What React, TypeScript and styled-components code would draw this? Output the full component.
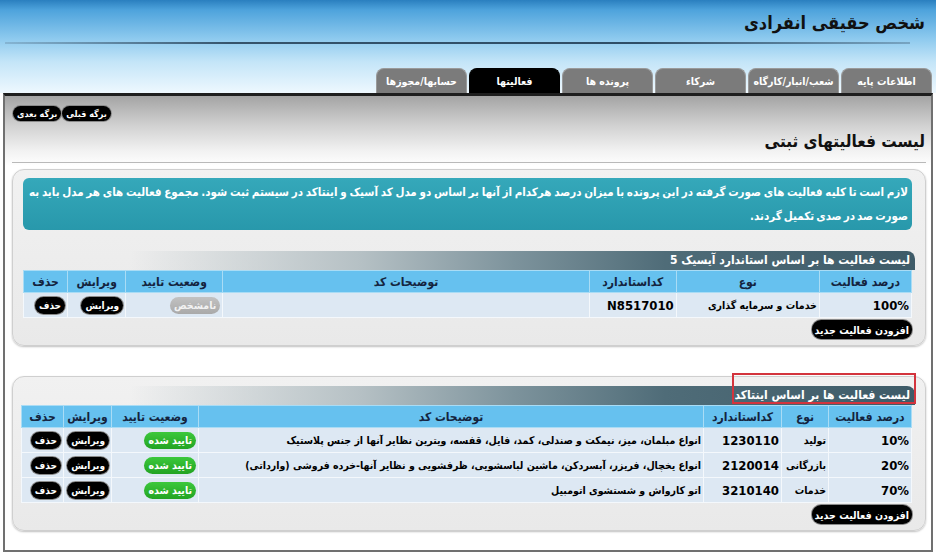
import styled, { createGlobalStyle } from "styled-components";

const GlobalStyle = createGlobalStyle`
  html, body {
    margin: 0;
    padding: 0;
    background: #ffffff;
  }
  body {
    font-family: "DejaVu Sans Condensed", "DejaVu Sans", sans-serif;
  }
`;

const Page = styled.div`
  direction: rtl;
  width: 936px;
  height: 554px;
  display: flex;
  flex-direction: column;
  overflow: hidden;
  padding-bottom: 2px;
  box-sizing: border-box;
`;

const Header = styled.div`
  height: 93px;
  display: flex;
  flex-direction: column;
  background: linear-gradient(
    to bottom,
    #2a7fbf 0px,
    #4ea3dc 10px,
    #8cc9ee 38px,
    #c4e5f8 62px,
    #eef8fe 93px
  );
`;

const Title = styled.h1`
  margin: 0;
  padding: 10px 11px 0 0;
  height: 26px;
  font-size: 18px;
  line-height: 26px;
  font-weight: bold;
  color: #111;
`;

const HeaderRule = styled.div`
  height: 2px;
  margin: 6px 26px 0 5px;
  background: linear-gradient(
    to left,
    rgba(70, 100, 125, 0.4) 0%,
    #2e4d66 30%,
    #35536b 75%,
    rgba(90, 120, 145, 0.3) 100%
  );
`;

const TabBar = styled.div`
  margin-top: auto;
  display: flex;
  gap: 2px;
  padding-right: 4px;
  align-items: flex-end;
`;

const Tab = styled.div<{ $active?: boolean }>`
  width: 91px;
  height: 25px;
  border-radius: 8px 8px 0 0;
  background: ${(p) => (p.$active ? "#000" : "#7b7b7b")};
  border: 1px solid ${(p) => (p.$active ? "#000" : "#9a9a9a")};
  border-bottom: none;
  box-sizing: border-box;
  color: #fff;
  font-size: 10.5px;
  font-weight: bold;
  white-space: nowrap;
  display: flex;
  align-items: center;
  justify-content: center;
`;

const Panel = styled.div`
  flex: 1;
  margin: 0 3px;
  border: 2px solid #707070;
  border-top: 3px solid #1e1e1e;
  background: linear-gradient(
    to bottom,
    #a4a4a4 0px,
    #cfcfcf 28px,
    #f2f2f2 55px,
    #ffffff 70px
  );
  padding: 10px 5px 0 7px;
  display: flex;
  flex-direction: column;
`;

const NavRow = styled.div`
  display: flex;
  justify-content: flex-end;
  gap: 1px;
  padding-left: 1px;
`;

const pillSizes = {
  sm: { h: 15, f: 9, pad: 4 },
  row: { h: 17, f: 10, pad: 4 },
  md: { h: 19, f: 10.5, pad: 3 },
};

const Pill = styled.span<{ $size?: keyof typeof pillSizes }>`
  display: inline-flex;
  align-items: center;
  justify-content: center;
  background: #000;
  color: #fff;
  font-weight: bold;
  border-radius: 9px;
  box-shadow: 0 0 0 1px #8a8a8a;
  white-space: nowrap;
  height: ${(p) => pillSizes[p.$size ?? "sm"].h}px;
  font-size: ${(p) => pillSizes[p.$size ?? "sm"].f}px;
  padding: 0 ${(p) => pillSizes[p.$size ?? "sm"].pad}px;
`;

const PageTitle = styled.h2`
  margin: 8px 0 0;
  padding-right: 1px;
  font-size: 17px;
  line-height: 24px;
  font-weight: bold;
  color: #111;
`;

const Divider = styled.div`
  height: 1px;
  background: #b9b9b9;
  margin: 9px 0 6px;
`;

const Section = styled.div<{ $gapTop?: number }>`
  margin-top: ${(p) => p.$gapTop ?? 0}px;
  border: 1px solid #cfcfcf;
  border-radius: 12px;
  background: linear-gradient(to bottom, #f1f1f1, #e9e9e9);
  box-shadow: 0 1px 2px rgba(0, 0, 0, 0.25);
  padding: 8px 13px 6px 10px;
  display: flex;
  flex-direction: column;
`;

const Notice = styled.div`
  background: linear-gradient(to bottom, #35a8ba, #2898ab);
  border-radius: 6px;
  color: #fff;
  font-size: 11.5px;
  font-weight: bold;
  line-height: 24px;
  word-spacing: -1.5px;
  padding: 2px 4px 2px 6px;
  text-align: justify;
  text-align-last: right;
`;

const Caption = styled.div<{ $gapTop?: number }>`
  position: relative;
  margin-top: ${(p) => p.$gapTop ?? 0}px;
  margin-right: -3px;
  height: 19px;
  line-height: 19px;
  padding-right: 5px;
  color: #fff;
  font-size: 12px;
  font-weight: bold;
  border-top-right-radius: 8px;
  background: linear-gradient(
    to left,
    #3e5b68 0%,
    #4f6c78 28%,
    #7d939c 45%,
    #b5c0c4 62%,
    rgba(225, 225, 225, 0) 88%
  );
`;

const Highlight = styled.div`
  position: absolute;
  top: -13px;
  right: -1px;
  width: 184px;
  height: 31px;
  border: 2px solid #d3343d;
  box-sizing: border-box;
  pointer-events: none;
`;

const Table = styled.table`
  width: 100%;
  border-collapse: collapse;
  table-layout: fixed;
`;

const Col = styled.col<{ $w: number }>`
  width: ${(p) => p.$w}px;
`;

const HeadCell = styled.th`
  background: #66c1ef;
  color: #14243e;
  font-size: 12px;
  font-weight: bold;
  height: 21px;
  padding: 0 2px;
  border: 1px solid #a9dcf5;
  text-align: center;
  white-space: nowrap;
`;

const Cell = styled.td<{ $num?: boolean }>`
  background: #dde8f3;
  color: #000;
  font-size: ${(p) => (p.$num ? "13px" : "10.5px")};
  font-weight: bold;
  height: 24px;
  padding: 0 2px;
  border: 1px solid #f4f8fc;
  text-align: right;
  white-space: nowrap;
  overflow: hidden;
`;

const Badge = styled.span<{ $ok?: boolean }>`
  display: inline-flex;
  align-items: center;
  height: 17px;
  padding: 0 4px;
  border-radius: 9px;
  font-size: 10.5px;
  font-weight: bold;
  color: ${(p) => (p.$ok ? "#fff" : "#f2f2f2")};
  background: ${(p) =>
    p.$ok
      ? "linear-gradient(to bottom, #3cc83c, #22a322)"
      : "linear-gradient(to bottom, #c2c2c2, #a9a9a9)"};
`;

const Actions = styled.div`
  display: flex;
  margin-top: 2px;
`;

type Row = {
  percent: string;
  kind: string;
  code: string;
  desc: string;
  ok: boolean;
};

const isicRows: Row[] = [
  {
    percent: "100%",
    kind: "خدمات و سرمایه گذاری",
    code: "N8517010",
    desc: "",
    ok: false,
  },
];

const intaRows: Row[] = [
  {
    percent: "10%",
    kind: "تولید",
    code: "1230110",
    desc: "انواع مبلمان، میز، نیمکت و صندلی، کمد، فایل، قفسه، ویترین نظایر آنها از جنس پلاستیک",
    ok: true,
  },
  {
    percent: "20%",
    kind: "بازرگانی",
    code: "2120014",
    desc: "انواع یخچال، فریزر، آبسردکن، ماشین لباسشویی، ظرفشویی و نظایر آنها-خرده فروشی (وارداتی)",
    ok: true,
  },
  {
    percent: "70%",
    kind: "خدمات",
    code: "3210140",
    desc: "اتو کارواش و شستشوی اتومبیل",
    ok: true,
  },
];

const tabs = [
  "اطلاعات پایه",
  "شعب/انبار/کارگاه",
  "شرکاء",
  "پرونده ها",
  "فعالیتها",
  "حسابها/مجوزها",
];

interface IActivityTable {
  rows: Row[];
  widths: number[];
}

function ActivityTable({ rows, widths }: IActivityTable) {
  return (
    <Table>
      <colgroup>
        {widths.map((w, i) => (
          <Col key={i} $w={w} />
        ))}
      </colgroup>
      <thead>
        <tr>
          <HeadCell>درصد فعالیت</HeadCell>
          <HeadCell>نوع</HeadCell>
          <HeadCell>کداستاندارد</HeadCell>
          <HeadCell>توضیحات کد</HeadCell>
          <HeadCell>وضعیت تایید</HeadCell>
          <HeadCell>ویرایش</HeadCell>
          <HeadCell>حذف</HeadCell>
        </tr>
      </thead>
      <tbody>
        {rows.map((row) => (
          <tr key={row.code}>
            <Cell $num>{row.percent}</Cell>
            <Cell>{row.kind}</Cell>
            <Cell $num>{row.code}</Cell>
            <Cell>{row.desc}</Cell>
            <Cell>
              <Badge $ok={row.ok}>{row.ok ? "تایید شده" : "نامشخص"}</Badge>
            </Cell>
            <Cell>
              <Pill $size="row">ویرایش</Pill>
            </Cell>
            <Cell>
              <Pill $size="row">حذف</Pill>
            </Cell>
          </tr>
        ))}
      </tbody>
    </Table>
  );
}

function App() {
  return (
    <>
      <GlobalStyle />
      <Page>
        <Header>
          <Title>شخص حقیقی انفرادی</Title>
          <HeaderRule />
          <TabBar>
            {tabs.map((t) => (
              <Tab key={t} $active={t === "فعالیتها"}>
                {t}
              </Tab>
            ))}
          </TabBar>
        </Header>
        <Panel>
          <NavRow>
            <Pill>برگه قبلی</Pill>
            <Pill>برگه بعدی</Pill>
          </NavRow>
          <PageTitle>لیست فعالیتهای ثبتی</PageTitle>
          <Divider />
          <Section>
            <Notice>
              لازم است تا کلیه فعالیت های صورت گرفته در این پرونده با میزان درصد
              هرکدام از آنها بر اساس دو مدل کد آسیک و اینتاکد در سیستم ثبت شود.
              مجموع فعالیت های هر مدل باید به صورت صد در صدی تکمیل گردند.
            </Notice>
            <Caption $gapTop={21}>لیست فعالیت ها بر اساس استاندارد آیسیک 5</Caption>
            <ActivityTable rows={isicRows} widths={[92, 143, 87, 366, 97, 58, 44]} />
            <Actions>
              <Pill $size="md">افزودن فعالیت جدید</Pill>
            </Actions>
          </Section>
          <Section $gapTop={30}>
            <Caption $gapTop={1}>
              لیست فعالیت ها بر اساس اینتاکد
              <Highlight />
            </Caption>
            <ActivityTable rows={intaRows} widths={[83, 47, 78, 505, 87, 48, 42]} />
            <Actions>
              <Pill $size="md">افزودن فعالیت جدید</Pill>
            </Actions>
          </Section>
        </Panel>
      </Page>
    </>
  );
}

export default App;
